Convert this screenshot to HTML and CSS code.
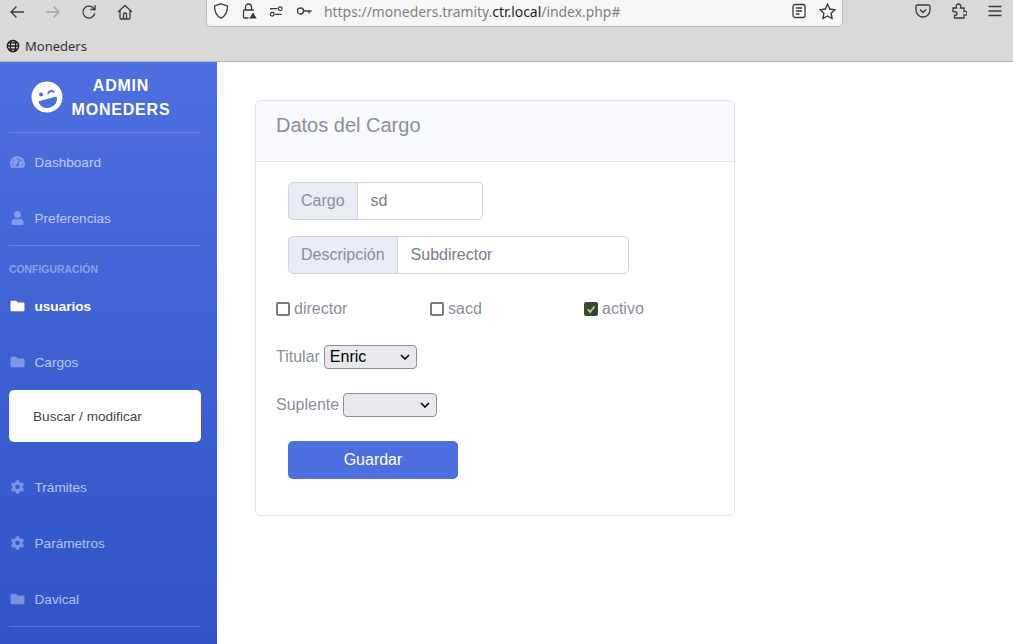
FILE: index.html
```html
<!DOCTYPE html>
<html>
  <head>
    <title>Moneders</title>
    <link rel="stylesheet" href="styles.css">
  </head>
  <body>
    <div class="browser">
      <div class="navbar">
        <div class="nav-btns">
          <svg class="ico" viewBox="0 0 16 16"><path d="M15 8H2M7.5 2.5 2 8l5.500 5.500"/></svg>
          <svg class="ico dim" viewBox="0 0 16 16"><path d="M1 8h13M8.500 2.500 14 8l-5.500 5.500"/></svg>
          <svg class="ico" viewBox="0 0 16 16"><path d="M13.800 9.500A6 6 0 1 1 11.500 3.200L14 5.500M14 1v4.500H9.500"/></svg>
          <svg class="ico" viewBox="0 0 16 16"><path d="M1 8 8 1.500 15 8M3 6.500V14a1 1 0 0 0 1 1h8a1 1 0 0 0 1-1V6.500M6.500 15v-4.500a1.500 1.500 0 0 1 3 0V15"/></svg>
        </div>
        <div class="urlbar">
          <svg class="ico" viewBox="0 0 16 16"><path d="M8 .8 14.500 3c0 6-1.500 9.800-6.500 12.200C3 12.800 1.500 9 1.500 3z"/></svg>
          <svg class="ico" viewBox="0 0 16 16"><path d="M4.500 7V4a3 3 0 0 1 6 0v3M8 15H3.500a1 1 0 0 1-1-1V8a1 1 0 0 1 1-1h8a1 1 0 0 1 1 .8"/><path class="solid" d="M12 8.500 16.500 16h-9z"/></svg>
          <svg class="ico small" viewBox="0 0 16 16"><path d="M1 5.500h8M13.500 11.500h-7"/><circle cx="12" cy="5.500" r="2"/><circle cx="3.500" cy="11.500" r="2"/></svg>
          <svg class="ico" viewBox="0 0 16 16"><circle cx="4.500" cy="8" r="3"/><path d="M7.500 8h8M13 8v2.500"/></svg>
          <div class="url">https://moneders.tramity.<b>ctr.local</b>/index.php#</div>
          <svg class="ico" viewBox="0 0 16 16"><rect x="2" y="1.500" width="12" height="13" rx="2"/><path d="M5 5h6M5 8h6M5 11h3.500"/></svg>
          <svg class="ico star" viewBox="0 0 16 16"><path d="M8 1.200 10.100 5.700 15 6.300 11.400 9.700 12.300 14.600 8 12.200 3.700 14.600 4.600 9.700 1 6.300 5.900 5.700z"/></svg>
        </div>
        <div class="tools">
          <svg class="ico" viewBox="0 0 16 16"><path d="M2.500 2h11A1.500 1.500 0 0 1 15 3.500V7A7 7 0 0 1 1 7V3.500A1.500 1.500 0 0 1 2.500 2zM5 6.500l3 3 3-3"/></svg>
          <svg class="ico" viewBox="0 0 16 16"><path d="M2 5h3.500C4.500 2.500 6 1 7.500 1S10.500 2.500 9.500 5H13v3.500c2-.8 3 .3 3 1.700s-1 2.500-3 1.700V15H3.500v-2.500C5.500 12.500 6 11.500 6 10.500S5 8.500 2 8.500z"/></svg>
          <svg class="ico" viewBox="0 0 16 16"><path d="M1.500 3.500h13M1.500 8h13M1.500 12.500h13"/></svg>
        </div>
      </div>
      <div class="bookmarks">
        <svg class="globe" viewBox="0 0 16 16"><circle cx="8" cy="8" r="6.500"/><ellipse cx="8" cy="8" rx="3" ry="6.500"/><path d="M1.500 8h13M2.500 4.500h11M2.500 11.500h11"/></svg>
        <span>Moneders</span>
      </div>
    </div>

    <div class="wrapper">
      <ul class="sidebar">
        <li class="brand">
          <svg class="brand-icon" viewBox="0 0 496 512"><path d="M248 8C111 8 0 119 0 256s111 248 248 248 248-111 248-248S385 8 248 8zm20.100 198.100c4-25.200 34.200-42.100 59.900-42.100s55.900 16.900 59.900 42.100c1.700 11.100-11.400 18.300-19.800 10.800l-9.500-8.500c-14.800-13.200-46.200-13.200-61 0L288 217c-8.400 7.400-21.600.3-19.900-10.900zM168 160c17.700 0 32 14.300 32 32s-14.300 32-32 32-32-14.300-32-32 14.300-32 32-32zm230.900 146C390 377 329.400 432 256 432h-16c-73.400 0-134-55-142.900-126-1.200-9.500 6.300-18 15.900-18h270c9.600 0 17.100 8.400 15.900 18z"/></svg>
          <div class="brand-text">ADMIN MONEDERS</div>
        </li>
        <li class="divider"></li>
        <li class="item">
          <svg class="icon" viewBox="0 0 576 512"><path d="M288 32C128.940 32 0 160.940 0 320c0 52.800 14.250 102.260 39.060 144.800 5.610 9.620 16.300 15.200 27.440 15.200h443c11.140 0 21.830-5.580 27.440-15.200C561.750 422.260 576 372.800 576 320c0-159.060-128.940-288-288-288zm0 64c14.710 0 26.580 10.130 30.320 23.650-1.110 2.260-2.640 4.230-3.450 6.670l-9.220 27.670c-5.130 3.490-10.970 6.010-17.640 6.010-17.670 0-32-14.330-32-32S270.330 96 288 96zM96 384c-17.670 0-32-14.330-32-32s14.330-32 32-32 32 14.330 32 32-14.330 32-32 32zm48-160c-17.670 0-32-14.330-32-32s14.330-32 32-32 32 14.330 32 32-14.330 32-32 32zm246.770-72.410l-61.330 184C343.130 347.330 352 364.540 352 384c0 11.720-3.380 22.550-8.880 32H232.880c-5.500-9.450-8.880-20.280-8.880-32 0-33.940 26.500-61.430 59.900-63.590l61.340-184.010c4.170-12.560 17.730-19.450 30.360-15.170 12.570 4.190 19.350 17.790 15.170 30.360zm14.660 57.200l15.520-46.550c3.470-1.290 7.130-2.230 11.050-2.230 17.670 0 32 14.330 32 32s-14.330 32-32 32c-11.380-.010-20.890-6.280-26.570-15.220zM480 384c-17.670 0-32-14.330-32-32s14.330-32 32-32 32 14.330 32 32-14.330 32-32 32z"/></svg>
          <span>Dashboard</span>
        </li>
        <li class="item">
          <svg class="icon" viewBox="0 0 448 512"><path d="M224 256c70.700 0 128-57.300 128-128S294.700 0 224 0 96 57.300 96 128s57.300 128 128 128zm89.600 32h-16.700c-22.200 10.200-46.900 16-72.900 16s-50.600-5.800-72.900-16h-16.700C60.200 288 0 348.200 0 422.400V464c0 26.500 21.500 48 48 48h352c26.500 0 48-21.500 48-48v-41.600c0-74.200-60.200-134.400-134.400-134.400z"/></svg>
          <span>Preferencias</span>
        </li>
        <li class="divider"></li>
        <li class="heading">CONFIGURACIÓN</li>
        <li class="item active">
          <svg class="icon" viewBox="0 0 512 512"><path d="M464 128H272l-64-64H48C21.490 64 0 85.490 0 112v288c0 26.510 21.490 48 48 48h416c26.510 0 48-21.490 48-48V176c0-26.510-21.490-48-48-48z"/></svg>
          <span>usuarios</span>
        </li>
        <li class="item">
          <svg class="icon" viewBox="0 0 512 512"><path d="M464 128H272l-64-64H48C21.490 64 0 85.490 0 112v288c0 26.510 21.490 48 48 48h416c26.510 0 48-21.490 48-48V176c0-26.510-21.490-48-48-48z"/></svg>
          <span>Cargos</span>
        </li>
        <li class="submenu"><a>Buscar / modificar</a></li>
        <li class="item">
          <svg class="icon" viewBox="0 0 512 512"><path d="M487.400 315.700l-42.600-24.600c4.300-23.200 4.300-47 0-70.200l42.600-24.600c4.900-2.800 7.100-8.600 5.500-14-11.100-35.600-30-67.800-54.700-94.600-3.800-4.100-10-5.100-14.800-2.300L380.800 110c-17.900-15.400-38.500-27.300-60.800-35.100V25.800c0-5.600-3.900-10.500-9.400-11.700-36.700-8.200-74.300-7.800-109.200 0-5.500 1.200-9.400 6.100-9.400 11.700V75c-22.200 7.900-42.800 19.800-60.800 35.100L88.700 85.500c-4.900-2.800-11-1.900-14.800 2.300-24.700 26.700-43.600 58.900-54.700 94.600-1.700 5.400.6 11.200 5.500 14L67.300 221c-4.300 23.200-4.300 47 0 70.200l-42.600 24.600c-4.900 2.800-7.100 8.600-5.500 14 11.100 35.600 30 67.800 54.700 94.600 3.800 4.100 10 5.100 14.800 2.300l42.600-24.600c17.900 15.400 38.500 27.300 60.800 35.100v49.200c0 5.600 3.900 10.500 9.400 11.700 36.700 8.200 74.300 7.800 109.200 0 5.500-1.200 9.400-6.100 9.400-11.700v-49.200c22.200-7.900 42.800-19.800 60.800-35.100l42.600 24.600c4.900 2.800 11 1.900 14.800-2.300 24.700-26.700 43.600-58.900 54.700-94.600 1.500-5.500-.7-11.300-5.600-14.100zM256 336c-44.100 0-80-35.900-80-80s35.900-80 80-80 80 35.900 80 80-35.900 80-80 80z"/></svg>
          <span>Trámites</span>
        </li>
        <li class="item">
          <svg class="icon" viewBox="0 0 512 512"><path d="M487.400 315.700l-42.600-24.600c4.300-23.200 4.300-47 0-70.200l42.600-24.600c4.900-2.800 7.100-8.600 5.500-14-11.100-35.600-30-67.800-54.700-94.600-3.800-4.100-10-5.100-14.800-2.300L380.800 110c-17.900-15.400-38.500-27.300-60.800-35.100V25.800c0-5.600-3.900-10.500-9.400-11.700-36.700-8.200-74.300-7.800-109.200 0-5.500 1.200-9.400 6.100-9.400 11.700V75c-22.200 7.900-42.800 19.800-60.800 35.100L88.700 85.500c-4.900-2.800-11-1.900-14.800 2.300-24.700 26.700-43.600 58.900-54.700 94.600-1.700 5.400.6 11.200 5.500 14L67.300 221c-4.300 23.200-4.300 47 0 70.200l-42.600 24.600c-4.900 2.800-7.100 8.600-5.500 14 11.100 35.600 30 67.800 54.700 94.600 3.800 4.100 10 5.100 14.800 2.300l42.600-24.600c17.900 15.400 38.500 27.300 60.800 35.100v49.200c0 5.600 3.900 10.500 9.400 11.700 36.700 8.200 74.300 7.800 109.200 0 5.500-1.200 9.400-6.100 9.400-11.700v-49.200c22.200-7.900 42.800-19.800 60.800-35.100l42.600 24.600c4.900 2.800 11 1.900 14.800-2.300 24.700-26.700 43.600-58.900 54.700-94.600 1.500-5.500-.7-11.300-5.600-14.100zM256 336c-44.100 0-80-35.900-80-80s35.900-80 80-80 80 35.900 80 80-35.900 80-80 80z"/></svg>
          <span>Parámetros</span>
        </li>
        <li class="item">
          <svg class="icon" viewBox="0 0 512 512"><path d="M464 128H272l-64-64H48C21.490 64 0 85.490 0 112v288c0 26.510 21.490 48 48 48h416c26.510 0 48-21.490 48-48V176c0-26.510-21.490-48-48-48z"/></svg>
          <span>Davical</span>
        </li>
        <li class="divider"></li>
      </ul>

      <div class="content">
        <div class="card">
          <div class="card-header">Datos del Cargo</div>
          <form class="card-body" action="">
            <div class="input-group">
              <span class="input-label">Cargo</span>
              <input class="input-cargo" value="sd" autocomplete="off" />
            </div>
            <div class="input-group">
              <span class="input-label">Descripción</span>
              <input class="input-desc" value="Subdirector" autocomplete="off" />
            </div>
            <div class="checks">
              <label class="check"><span class="box"></span>director</label>
              <label class="check"><span class="box"></span>sacd</label>
              <label class="check">
                <span class="box on"><svg viewBox="0 0 12 12"><path d="M2 6.500 5 9.500 10 3"/></svg></span>activo
              </label>
            </div>
            <div class="select-row">
              <label>Titular</label>
              <select class="select-titular"><option>Enric</option></select>
            </div>
            <div class="select-row">
              <label>Suplente</label>
              <select class="select-suplente"><option></option></select>
            </div>
            <button class="btn" type="button">Guardar</button>
          </form>
        </div>
      </div>
    </div>
  </body>
</html>
```

FILE: styles.css
```css
html, body { height: 100%; }
body { margin: 0; height: 644px; overflow: hidden; display: flex; flex-direction: column; font-family: "Liberation Sans", Arial, sans-serif; color: #8c8e9b; background: #fff; }

/* browser chrome */
.browser { height: 62px; flex-shrink: 0; box-sizing: border-box; background: #d9d9d9; border-bottom: 1px solid #b4b4b4; font-family: "Noto Sans", sans-serif; }
.navbar { height: 27px; display: flex; align-items: flex-start; }
.nav-btns { width: 206px; box-sizing: border-box; padding: 4px 0 0 9px; display: flex; gap: 20px; }
.ico { width: 16px; height: 16px; flex-shrink: 0; fill: none; stroke: #3a3a3c; stroke-width: 1.300; }
.ico.dim { stroke: #a4a4a6; }
.ico.small { width: 15px; }
.ico .solid { fill: #3a3a3c; stroke: #f5f5f5; stroke-width: 1; }
.urlbar { width: 637px; height: 27px; box-sizing: border-box; display: flex; align-items: center; padding: 0 6px 4px 6px; gap: 12px; background: #f6f6f6; border: 1px solid #b9b9b9; border-top: none; border-radius: 0 0 5px 5px; }
.url { flex-grow: 1; font-size: 13.900px; color: #7f7f81; white-space: nowrap; }
.url b { font-weight: 400; color: #1f1f21; }
.urlbar .star { width: 17px; height: 17px; }
.tools { flex-grow: 1; padding: 3px 0 0 72px; display: flex; gap: 20px; }
.bookmarks { height: 34px; box-sizing: border-box; padding: 4px 0 0 6px; display: flex; align-items: center; gap: 5px; font-size: 13px; color: #333336; }
.globe { width: 14px; height: 14px; fill: none; stroke: #1f1f21; stroke-width: 1.500; }

/* page */
.wrapper { flex-grow: 1; display: flex; min-height: 0; }
.sidebar { width: 217px; height: 582px; flex-shrink: 0; margin: 0; padding: 0; list-style: none; overflow: hidden; background: linear-gradient(180deg, #4e6fdf 0%, #2e54c6 100%); color: rgba(255, 255, 255, 0.65); font-size: 13.600px; }
.brand { height: 70px; box-sizing: border-box; display: flex; align-items: center; gap: 2px; padding-left: 31px; color: #fff; }
.brand-icon { width: 32px; height: 32px; fill: #fff; transform: rotate(-15deg); }
.brand-text { width: 112px; margin-top: 1px; font-size: 16px; line-height: 24px; font-weight: 700; text-align: center; letter-spacing: 0.800px; }
.divider { height: 1px; margin: 0 16px 0 9px; background: rgba(255, 255, 255, 0.2); }
.item { height: 56px; box-sizing: border-box; display: flex; align-items: center; padding: 2px 0 0 10px; gap: 9.500px; }
.item .icon { width: 15px; height: 14px; fill: rgba(255, 255, 255, 0.35); }
.item.active { color: #fff; font-weight: 700; }
.item.active .icon { fill: #fff; }
.heading { height: 31px; padding: 17px 0 0 9px; box-sizing: border-box; font-size: 10.400px; font-weight: 700; line-height: 14px; color: rgba(255, 255, 255, 0.4); }
.submenu { height: 52px; margin: 1px 16px 16px 9px; display: flex; align-items: center; padding-left: 24px; background: #fff; border-radius: 5px; color: #45464f; }
.submenu a { display: block; }

.content { flex-grow: 1; padding: 38px 0 0 38px; }
.card { width: 480px; height: 416px; box-sizing: border-box; border: 1px solid #e3e6f0; border-radius: 5px; overflow: hidden; }
.card-header { height: 61px; box-sizing: border-box; padding: 12px 20px; font-size: 20px; line-height: 24px; background: #f8f9fc; border-bottom: 1px solid #e3e6f0; }
.card-body { padding: 20px 20px 0; }
.input-group { display: flex; height: 38px; margin: 0 0 16px 12px; font-size: 16px; }
.input-label { display: flex; align-items: center; padding: 0 12px; background: #eaecf4; border: 1px solid #d1d3e2; border-radius: 5px 0 0 5px; }
.input-group input { box-sizing: border-box; height: 38px; margin: 0 0 0 -1px; padding: 6px 12px 6px 13px; font: inherit; color: #7a7c89; background: #fff; border: 1px solid #d1d3e2; border-radius: 0 5px 5px 0; outline: none; }
.input-cargo { width: 126px; }
.input-desc { width: 232px; }
.checks { display: flex; height: 24px; margin-top: 23px; font-size: 16px; line-height: 24px; }
.check { width: 154px; flex-shrink: 0; display: flex; align-items: center; gap: 4px; }
.box { width: 14px; height: 14px; box-sizing: border-box; border: 2px solid #7b7b7f; border-radius: 2px; display: block; }
.box.on { background: #3a4730; border-color: #3a4730; }
.box svg { display: block; width: 10px; height: 10px; fill: none; stroke: #b5d6a0; stroke-width: 2; }
.select-row { height: 24px; margin-top: 24px; display: flex; align-items: center; gap: 4px; font-size: 16px; }
.select-row select { height: 24px; box-sizing: border-box; padding: 0 0 1px 5px; appearance: none; font-family: "Liberation Sans", Arial, sans-serif; font-size: 16px; color: #000; border: 1px solid #8f8f9d; border-radius: 4px; background: #e9e9ed url("data:image/svg+xml,%3Csvg xmlns='http://www.w3.org/2000/svg' width='10' height='6'%3E%3Cpath d='M1 1l4 4 4-4' fill='none' stroke='%23000' stroke-width='1.600'/%3E%3C/svg%3E") no-repeat right 6px center; }
.select-titular { width: 93px; }
.select-suplente { width: 94px; }
.btn { display: block; width: 170px; height: 38px; margin: 24px 0 0 12px; font: inherit; font-size: 16px; color: #fff; background: #4e6fdf; border: none; border-radius: 5px; }
```
